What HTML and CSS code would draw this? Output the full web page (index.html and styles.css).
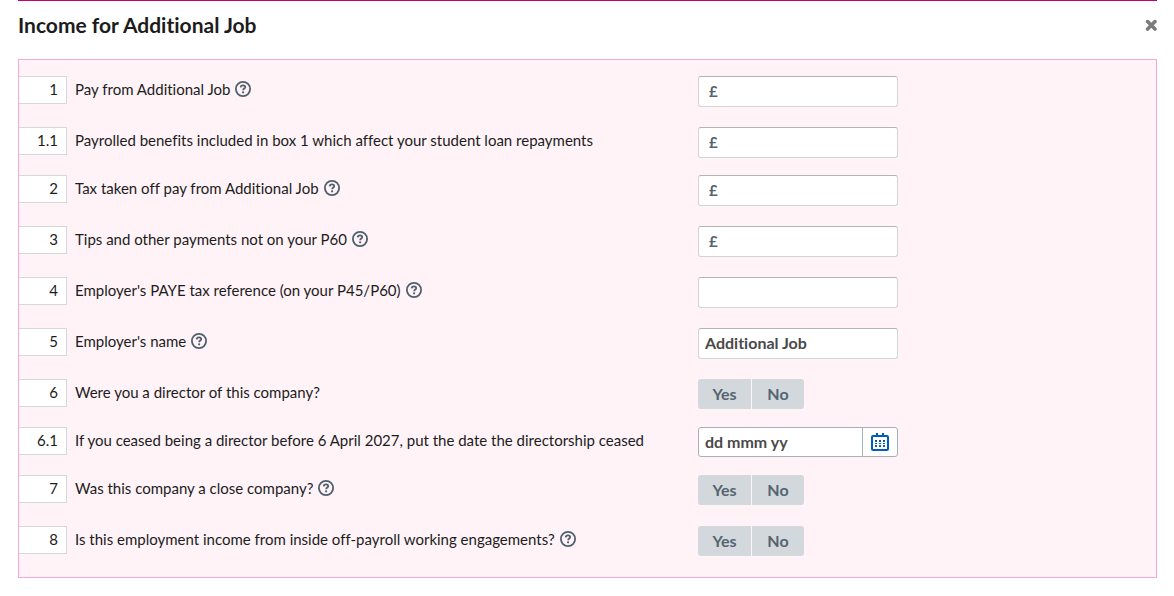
FILE: index.html
```
<!DOCTYPE html>
<html lang="en">
<head>
    <meta charset="UTF-8">
    <meta name="viewport" content="width=device-width, initial-scale=1.0">
    <title>Income for Additional Job</title>
    <link rel="stylesheet" href="styles.css">
</head>
<body>
    <svg class="sprite" aria-hidden="true">
        <symbol id="help" viewBox="0 0 16 16">
            <circle cx="8" cy="8" r="7.1" fill="none" stroke="currentColor" stroke-width="1.8"/>
            <path d="M5.7 6.4C5.8 5.1 6.7 4.4 8 4.4s2.2.7 2.2 1.8c0 1.4-2 1.4-2 3" fill="none" stroke="currentColor" stroke-width="1.8"/>
            <circle cx="8.1" cy="11.3" r="1.1" fill="currentColor"/>
        </symbol>
    </svg>

    <main class="section">
        <header class="section-header">
            <h1>Income for Additional Job</h1>
            <button type="button" class="close" aria-label="Close">
                <svg viewBox="0 0 12 12"><path d="M2.6 2.6l7.4 7.4M10 2.6L2.6 10" stroke="currentColor" stroke-width="3.6" stroke-linecap="round"/></svg>
            </button>
        </header>

        <form class="panel">
            <div class="row">
                <span class="number">1</span>
                <div class="question">
                    <label for="pay">Pay from Additional Job</label>
                    <button type="button" class="help" aria-label="Help"><svg><use href="#help"/></svg></button>
                </div>
                <div class="field money"><span>£</span><input type="text" id="pay"></div>
            </div>

            <div class="row compact">
                <span class="number">1.1</span>
                <div class="question">
                    <label for="benefits">Payrolled benefits included in box 1 which affect your student loan repayments</label>
                </div>
                <div class="field money"><span>£</span><input type="text" id="benefits"></div>
            </div>

            <div class="row">
                <span class="number">2</span>
                <div class="question">
                    <label for="tax">Tax taken off pay from Additional Job</label>
                    <button type="button" class="help" aria-label="Help"><svg><use href="#help"/></svg></button>
                </div>
                <div class="field money"><span>£</span><input type="text" id="tax"></div>
            </div>

            <div class="row">
                <span class="number">3</span>
                <div class="question">
                    <label for="tips">Tips and other payments not on your P60</label>
                    <button type="button" class="help" aria-label="Help"><svg><use href="#help"/></svg></button>
                </div>
                <div class="field money"><span>£</span><input type="text" id="tips"></div>
            </div>

            <div class="row">
                <span class="number">4</span>
                <div class="question">
                    <label for="reference">Employer's PAYE tax reference (on your P45/P60)</label>
                    <button type="button" class="help" aria-label="Help"><svg><use href="#help"/></svg></button>
                </div>
                <div class="field"><input type="text" id="reference"></div>
            </div>

            <div class="row">
                <span class="number">5</span>
                <div class="question">
                    <label for="employer">Employer's name</label>
                    <button type="button" class="help" aria-label="Help"><svg><use href="#help"/></svg></button>
                </div>
                <div class="field"><input type="text" id="employer" value="Additional Job"></div>
            </div>

            <div class="row compact">
                <span class="number">6</span>
                <div class="question">
                    <span id="director">Were you a director of this company?</span>
                </div>
                <div class="yes-no" role="group" aria-labelledby="director">
                    <button type="button">Yes</button>
                    <button type="button">No</button>
                </div>
            </div>

            <div class="row compact">
                <span class="number">6.1</span>
                <div class="question">
                    <label for="ceased">If you ceased being a director before 6 April 2027, put the date the directorship ceased</label>
                </div>
                <div class="field date">
                    <input type="text" id="ceased" placeholder="dd mmm yy">
                    <button type="button" aria-label="Open calendar">
                        <svg viewBox="0 0 18 18" fill="currentColor">
                            <path fill-rule="evenodd" d="M2 2h3V0h2v2h4V0h2v2h3a2 2 0 0 1 2 2v12a2 2 0 0 1-2 2H2a2 2 0 0 1-2-2V4a2 2 0 0 1 2-2zm0 2v12h14V4z"/>
                            <path d="M4 7h2v2H4zM8 7h2v2H8zM12 7h2v2h-2zM4 10h2v1H4zM8 10h2v1H8zM12 10h2v1h-2zM4 12h2v2H4zM8 12h2v2H8zM12 12h2v2h-2z"/>
                        </svg>
                    </button>
                </div>
            </div>

            <div class="row">
                <span class="number">7</span>
                <div class="question">
                    <span id="close-company">Was this company a close company?</span>
                    <button type="button" class="help" aria-label="Help"><svg><use href="#help"/></svg></button>
                </div>
                <div class="yes-no" role="group" aria-labelledby="close-company">
                    <button type="button">Yes</button>
                    <button type="button">No</button>
                </div>
            </div>

            <div class="row">
                <span class="number">8</span>
                <div class="question">
                    <span id="off-payroll">Is this employment income from inside off-payroll working engagements?</span>
                    <button type="button" class="help" aria-label="Help"><svg><use href="#help"/></svg></button>
                </div>
                <div class="yes-no" role="group" aria-labelledby="off-payroll">
                    <button type="button">Yes</button>
                    <button type="button">No</button>
                </div>
            </div>
        </form>
    </main>
</body>
</html>
```
FILE: styles.css
```
* {
    box-sizing: border-box;
}

body {
    margin: 0;
    font-family: Lato, Arial, sans-serif;
    font-size: 15px;
    font-variant-ligatures: none;
    color: #1c1c1c;
    background-color: #fff;
}

button,
input {
    margin: 0;
    padding: 0;
    font: inherit;
    border: none;
    background: none;
}

button {
    cursor: pointer;
}

svg {
    display: block;
    width: 100%;
    height: 100%;
}

.sprite {
    display: none;
}

.section {
    margin: 0 17px 0 18px;
    border-top: 1px solid #c8006e;
}

.section-header {
    display: flex;
    justify-content: space-between;
    align-items: center;
    height: 48px;
    margin-bottom: 10px;
}

.section-header h1 {
    margin: 0;
    font-size: 21px;
    line-height: 24px;
    font-weight: bold;
}

.close {
    width: 12px;
    height: 12px;
    color: #7b7b7b;
}

.panel {
    padding-top: 16px;
    border: 1px solid #f9a8d4;
    background-color: #fff3f8;
}

.row {
    display: grid;
    grid-template-columns: 48px minmax(0, 615px) 200px;
    column-gap: 8px;
    align-items: start;
    min-height: 51px;
}

/* rows without a help button sit closer together */
.row.compact {
    min-height: 48px;
}

.number {
    height: 28px;
    padding-right: 8px;
    line-height: 24px;
    text-align: right;
    border: 1px solid #d2d8dc;
    border-left: none;
    background-color: #fff;
}

.question {
    display: flex;
    align-items: center;
    gap: 5px;
    min-height: 26px;
    line-height: 20px;
}

.help {
    flex: none;
    width: 16px;
    height: 16px;
    color: #4f606d;
}

.field {
    display: flex;
    height: 31px;
    border: 1px solid #d0d5d8;
    border-top-color: #b0b4b7;
    border-radius: 3px;
    background-color: #fff;
    overflow: hidden;
}

.field input {
    flex: 1;
    min-width: 0;
    padding: 0 6px 2px;
    font-weight: bold;
    color: #4a4a4a;
    outline: none;
}

.field input::placeholder {
    color: #4a4a4a;
    opacity: 1;
}

.money span {
    padding-left: 10px;
    line-height: 28px;
    font-weight: bold;
    color: #55646f;
}

.date {
    height: 30px;
    border-color: #a5b1b8;
}

.date button {
    display: flex;
    justify-content: center;
    align-items: center;
    width: 35px;
    border-left: 1px solid #a5b1b8;
    color: #005eb8;
}

.date svg {
    width: 18px;
    height: 18px;
}

.yes-no {
    display: flex;
    gap: 1px;
}

.yes-no button {
    width: 53px;
    height: 30px;
    padding-bottom: 2px;
    font-weight: bold;
    color: #55646f;
    background-color: #d2d8dc;
}

.yes-no button:first-child {
    border-radius: 3px 0 0 3px;
}

.yes-no button:last-child {
    width: 52px;
    border-radius: 0 3px 3px 0;
}

.field input,
.yes-no button {
    font-size: 16px;
}
```
